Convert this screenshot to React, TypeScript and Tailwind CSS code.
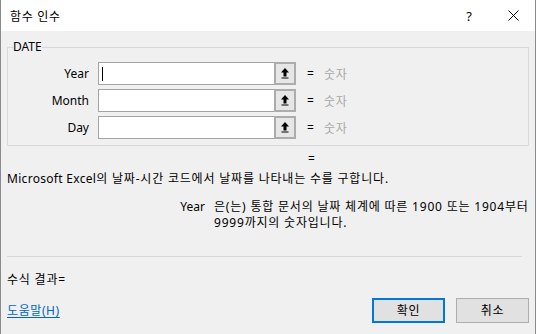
import React from 'react';

type ArgRow = {
  label: string;
  caret?: boolean;
};

const rows: ArgRow[] = [
  { label: 'Year', caret: true },
  { label: 'Month' },
  { label: 'Day' },
];

// 범위 선택 버튼 아이콘 (위쪽 화살표 + 밑줄)
const CollapseIcon = () => (
  <svg width="8" height="11" viewBox="0 0 8 11" className="block">
    <polygon points="4,0 8,4.5 0,4.5" fill="#000" />
    <rect x="2.5" y="4" width="3" height="4.5" fill="#000" />
    <rect x="0.5" y="9.5" width="7" height="1" fill="#000" />
  </svg>
);

const CloseIcon = () => (
  <svg width="11" height="11" viewBox="0 0 11 11" className="block">
    <path d="M0.5 0.5 L10.5 10.5 M10.5 0.5 L0.5 10.5" stroke="#000" strokeWidth="1" />
  </svg>
);

const App = () => {
  return (
    <div className="w-[537px] h-[334px] bg-white overflow-hidden flex text-[12px] leading-[16px] text-black font-['Noto_Sans','Noto_Sans_CJK_KR',sans-serif]">
      <div className="w-[536px] h-[334px] border-x border-[#8a8a8a] bg-[#f0f0f0] flex flex-col shrink-0">
        {/* 타이틀 바 */}
        <div className="h-[31px] bg-white flex items-center pl-[9px] shrink-0">
          <span className="tracking-[0.8px] font-['Noto_Sans_CJK_KR',sans-serif]">함수 인수</span>
          <span className="ml-auto mr-[36px] text-[13px]">?</span>
          <span className="mr-[16px]">
            <CloseIcon />
          </span>
        </div>

        <div className="flex flex-col pl-[6px]">
          {/* 인수 그룹 */}
          <fieldset className="mt-[8px] w-[522px] border border-[#d9d9d9] pl-[5px] pb-[6px]">
            <legend className="leading-[16px]">DATE</legend>
            <div className="mt-[7px] -ml-[5px] flex flex-col gap-[4px]">
              {rows.map((row) => (
                <div key={row.label} className="flex items-center h-[23px]">
                  <span className="w-[82px] text-right pr-[1px]">{row.label}</span>
                  <div className="ml-[8px] w-[177px] h-[23px] bg-white border border-[#a3a3a3] flex items-center pl-[3px]">
                    {row.caret && <span className="w-[1px] h-[14px] bg-black" />}
                  </div>
                  <div className="w-[22px] h-[23px] -ml-[1px] border-2 border-[#acacac] bg-[#e6e6e6] flex items-center justify-center">
                    <CollapseIcon />
                  </div>
                  <span className="ml-[11px]">=</span>
                  <span className="ml-[10px] tracking-[0.8px] text-[#a8a8a8] font-['Noto_Sans_CJK_KR',sans-serif]">숫자</span>
                </div>
              ))}
            </div>
          </fieldset>

          <div className="mt-[5px] pl-[301px]">=</div>

          <p className="mt-[4px] tracking-[0.8px]">
            <span className="tracking-[0.3px]">Microsoft Excel</span>의 날짜-시간 코드에서 날짜를 나타내는 수를 구합니다.
          </p>

          <div className="mt-[12px] flex">
            <span className="w-[198px] text-right shrink-0">Year</span>
            <p className="ml-[9px] tracking-[0.8px]">
              은(는) 통합 문서의 날짜 체계에 따른 1900 또는 1904부터
              <br />
              9999까지의 숫자입니다.
            </p>
          </div>

          <div className="mt-[25px] w-[515px] h-[1px] bg-[#d9d9d9]" />

          <div className="mt-[15px] tracking-[0.8px]">수식 결과=</div>

          <div className="mt-[10px] flex items-center w-[522px]">
            <a href="#" className="text-[#0066cc] tracking-[0.6px] underline underline-offset-2">
              도움말(H)
            </a>
            <button className="ml-auto w-[73px] h-[25px] border-2 border-[#0078d7] bg-[#e1e1e1] tracking-[0.8px] flex items-center justify-center">
              확인
            </button>
            <button className="ml-[11px] w-[73px] h-[25px] border border-[#adadad] bg-[#e1e1e1] tracking-[0.8px] flex items-center justify-center">
              취소
            </button>
          </div>
        </div>
      </div>
    </div>
  );
};

export default App;
